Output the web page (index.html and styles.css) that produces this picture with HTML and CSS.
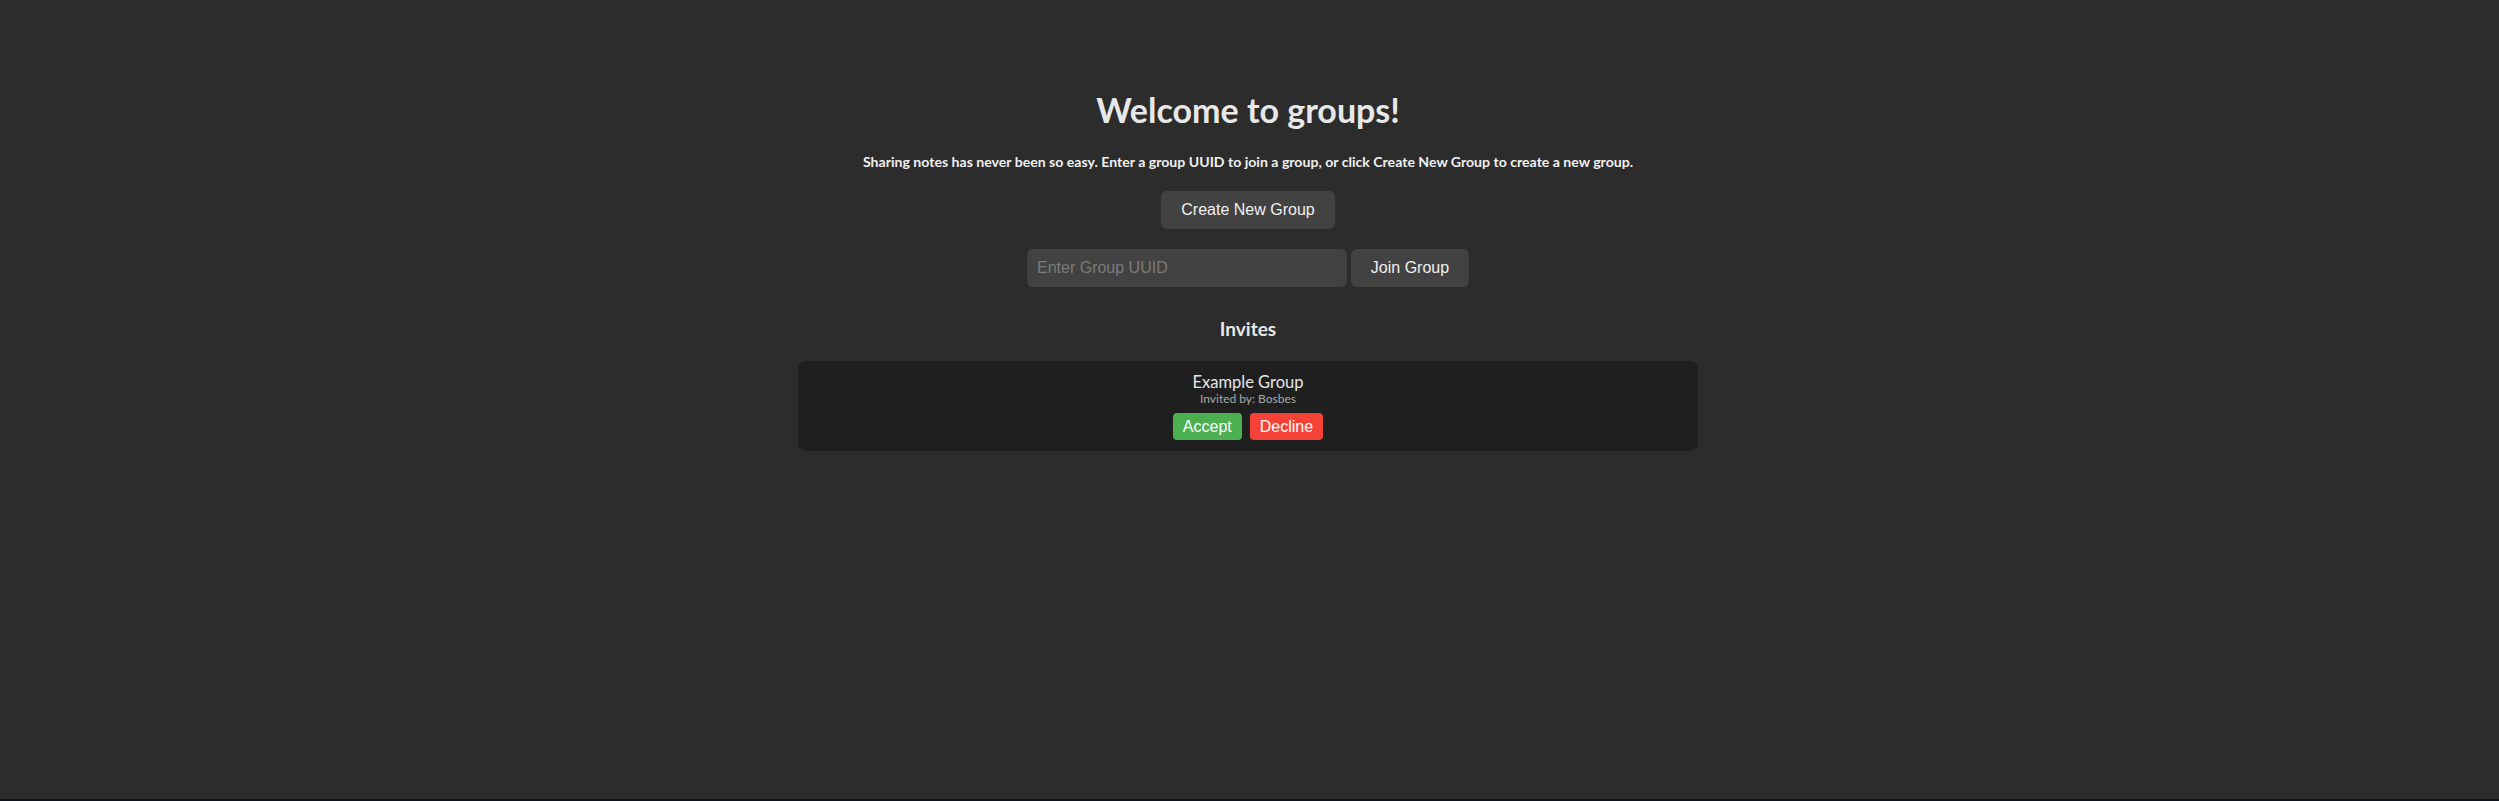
FILE: index.html
```html
<!DOCTYPE html>
<html lang="en">
<head>
<meta charset="utf-8">
<title>Groups</title>
<link rel="stylesheet" href="styles.css">
</head>
<body>
<main class="groups">
  <h1 class="title">Welcome to groups!</h1>
  <p class="lead">Sharing notes has never been so easy. Enter a group UUID to join a group, or click Create New Group to create a new group.</p>
  <button class="btn btn-create">Create New Group</button>
  <div class="join-row">
    <input class="uuid" type="text" placeholder="Enter Group UUID">
    <button class="btn btn-join">Join Group</button>
  </div>
  <h3 class="section-title">Invites</h3>
  <div class="invite-card">
    <div class="invite-name">Example Group</div>
    <div class="invite-from">Invited by: Bosbes</div>
    <div class="invite-actions">
      <button class="act accept">Accept</button>
      <button class="act decline">Decline</button>
    </div>
  </div>
</main>
</body>
</html>
```

FILE: styles.css
```css
html, body {
  margin: 0;
  padding: 0;
  background: #2c2c2c;
  height: 100%;
}

body {
  font-family: Lato, "Open Sans", sans-serif;
  color: #e6e6e6;
  border-bottom: 2px solid #0e1320;
  box-sizing: border-box;
}

.groups {
  display: flex;
  flex-direction: column;
  align-items: center;
  padding: 90px 3px 0 0;
}

.title {
  margin: 0;
  font-size: 34px;
  line-height: 40px;
  font-weight: 700;
  color: #e8e8e8;
}

.lead {
  margin: 23px 0 0;
  font-size: 14.1px;
  line-height: 17px;
  font-weight: 700;
  color: #f0f0f0;
}

.btn {
  font-family: "Liberation Sans", Arial, sans-serif;
  font-size: 16px;
  color: #f0f0f0;
  background: #424242;
  border: none;
  border-radius: 6px;
  height: 38px;
  padding: 0;
  white-space: nowrap;
}

.btn-create {
  margin-top: 21px;
  width: 174px;
}

.join-row {
  display: flex;
  gap: 4px;
  margin-top: 20px;
}

.uuid {
  box-sizing: border-box;
  width: 320px;
  height: 38px;
  padding: 0 10px;
  background: #424242;
  border: none;
  border-radius: 6px;
  font-family: "Liberation Sans", Arial, sans-serif;
  font-size: 16px;
  color: #f0f0f0;
}

.uuid::placeholder {
  color: #7a7a7a;
}

.btn-join {
  width: 118px;
}

.section-title {
  margin: 31px 0 0;
  font-size: 19px;
  line-height: 22px;
  font-weight: 700;
  color: #e8e8e8;
}

.invite-card {
  box-sizing: border-box;
  width: 900px;
  margin-top: 21px;
  padding: 11px 0 11px;
  background: #1f1f1f;
  border-radius: 8px;
  display: flex;
  flex-direction: column;
  align-items: center;
}

.invite-name {
  font-size: 16.5px;
  line-height: 20px;
  color: #e6e6e6;
}

.invite-from {
  font-size: 12px;
  line-height: 14px;
  color: #a8a8a8;
}

.invite-actions {
  display: flex;
  gap: 8px;
  margin-top: 7px;
}

.act {
  font-family: "Liberation Sans", Arial, sans-serif;
  font-size: 16px;
  color: #ffffff;
  border: none;
  border-radius: 4px;
  height: 27px;
  padding: 0 10px;
}

.accept {
  background: #4caf50;
}

.decline {
  background: #f44336;
}
```
